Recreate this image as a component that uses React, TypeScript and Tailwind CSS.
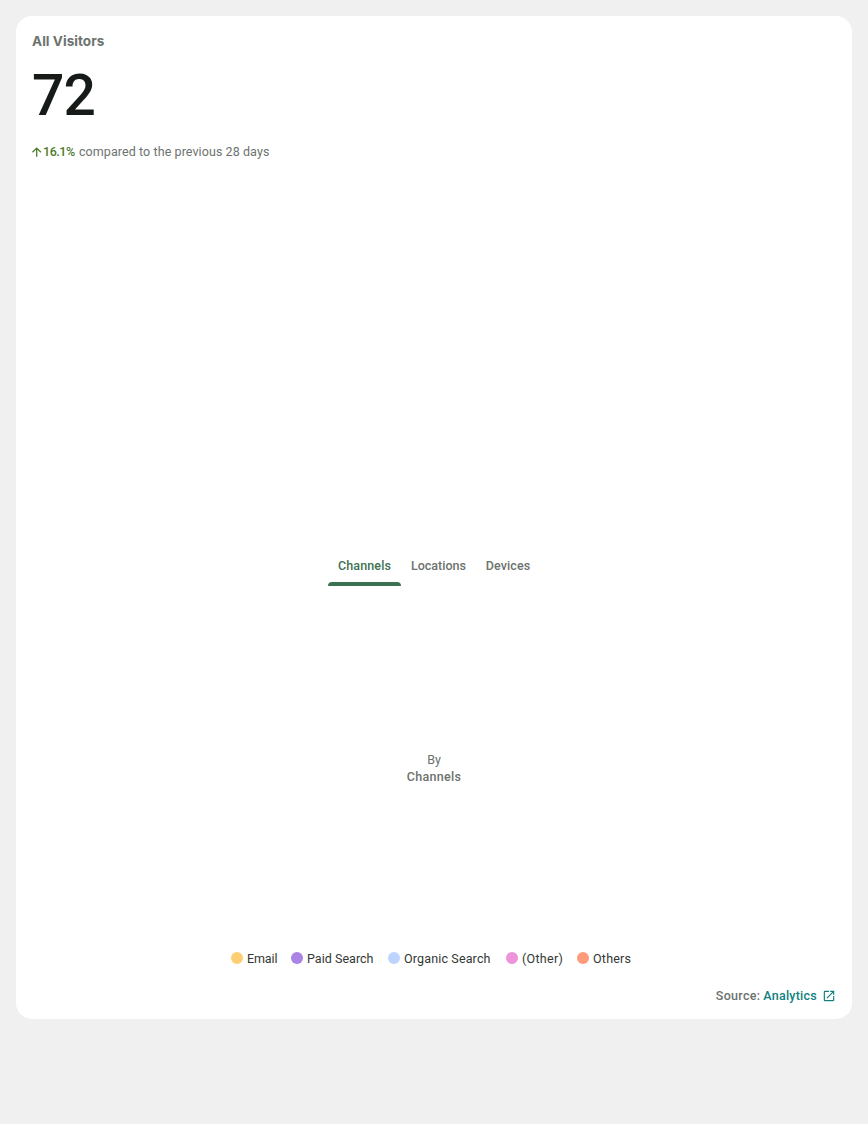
import { MdOpenInNew } from "react-icons/md";

const tabs = [
  { label: "Channels", width: "w-[73px]", tracking: "tracking-[0.12px]", active: true },
  { label: "Locations", width: "w-[75px]", tracking: "tracking-[0.02px]", active: false },
  { label: "Devices", width: "w-[64px]", tracking: "tracking-[0.12px]", active: false },
];

const legend = [
  { label: "Email", color: "bg-[#fece72]", width: "w-[60px]", tracking: "tracking-[-0.1px]" },
  { label: "Paid Search", color: "bg-[#a983e6]", width: "w-[97px]", tracking: "tracking-[0.03px]" },
  { label: "Organic Search", color: "bg-[#bed4ff]", width: "w-[118px]", tracking: "tracking-[0.15px]" },
  { label: "(Other)", color: "bg-[#ee92da]", width: "w-[71px]", tracking: "tracking-[0.28px]" },
  { label: "Others", color: "bg-[#ff9b7a]", width: "w-[55px]", tracking: "tracking-[0.22px]" },
];

export default function App() {
  return (
    <div className="min-h-screen bg-[#f0f0f0] p-4 font-['Roboto',sans-serif] text-[12.5px] text-[#6c726e]">
      <section className="flex h-[1003px] flex-col rounded-2xl bg-white px-4">
        <h3 className="mt-4 h-5 font-['Inter',sans-serif] text-[13.5px] leading-[19px] font-bold tracking-[0.05px]">All Visitors</h3>
        <div className="mt-3 h-16 text-[57px] leading-[63px] font-medium tracking-[-1px] text-[#161b18]">72</div>
        <div className="mt-[15px] flex h-[18px] items-center leading-[18px]">
          <svg className="mr-[1px] h-[10px] w-[10px] shrink-0" viewBox="0 0 10 10" fill="none" stroke="#4c7b2b" strokeWidth="1.3">
            <path d="M4.7 9.8V1.2M.5 5.3l4.2-4.2 4.2 4.2" />
          </svg>
          <span className="w-9 font-medium tracking-[-0.45px] whitespace-nowrap text-[#4c7b2b]">16.1%</span>
          <span className="tracking-[0.08px] whitespace-nowrap">compared to the previous 28 days</span>
        </div>
        <div className="mt-[385px] flex h-10 justify-center font-medium">
          {tabs.map((tab) => (
            <button
              key={tab.label}
              className={`flex flex-col items-center ${tab.width} ${tab.active ? "text-[#3c7251]" : ""}`}
            >
              <span className={`h-9 leading-[39px] whitespace-nowrap ${tab.tracking}`}>{tab.label}</span>
              {tab.active && <span className="h-1 w-full rounded-t-[4px] bg-[#3c7251]" />}
            </button>
          ))}
        </div>
        <div className="mt-[165px] text-center leading-[17px]">
          <div>By</div>
          <div className="font-medium tracking-[0.3px]">Channels</div>
        </div>
        <div className="mt-[164px] ml-[199px] flex h-[18px] text-[#333835]">
          {legend.map((item) => (
            <div key={item.label} className={`flex shrink-0 items-center gap-1 ${item.width}`}>
              <span className={`h-3 w-3 shrink-0 rounded-full ${item.color}`} />
              <span className={`pt-0.5 whitespace-nowrap ${item.tracking}`}>{item.label}</span>
            </div>
          ))}
        </div>
        <div className="mt-5 flex h-[18px] items-center justify-end font-medium">
          <span className="mr-[3px] tracking-[0.28px]">Source:</span>
          <a href="#analytics" className="flex items-center gap-[5px] tracking-[0.25px] text-[#108080]">
            Analytics
            <MdOpenInNew className="h-[14px] w-[14px]" />
          </a>
        </div>
      </section>
    </div>
  );
}
